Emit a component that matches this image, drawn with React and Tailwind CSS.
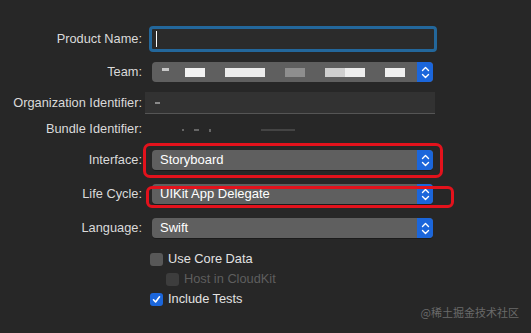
import React from 'react'

const Stepper = () => (
  <div className="w-[16px] h-full bg-[#1b66db] rounded-r-[4px] flex items-center justify-center">
    <svg width="9" height="13" viewBox="0 0 9 13" fill="none" stroke="white" strokeWidth="1.4" strokeLinecap="round" strokeLinejoin="round">
      <path d="M1.5 4.5 L4.5 1.5 L7.5 4.5" />
      <path d="M1.5 8.5 L4.5 11.5 L7.5 8.5" />
    </svg>
  </div>
)

function Popup({ value }) {
  return (
    <div className="ml-[2px] w-[281px] h-[20px] bg-[#5f5f5f] rounded-[4px] flex items-stretch shadow-[0_1px_0_rgba(0,0,0,0.3)]">
      <div className="flex-1 flex items-center pl-[8px] text-[13px] text-white overflow-hidden">
        {value}
      </div>
      <Stepper />
    </div>
  )
}

function Row({ label, className = '', children }) {
  return (
    <div className={`flex items-center ${className}`}>
      <div className="w-[143px] text-right pr-[1px] text-[12.8px] text-[#dadada] shrink-0">{label}</div>
      <div className="ml-[7px] flex items-center relative">{children}</div>
    </div>
  )
}

function Check({ checked, disabled, label, indent }) {
  return (
    <div className={`flex items-center h-[14px] ${indent ? 'ml-[166px]' : 'ml-[150px]'}`}>
      <div
        className={`w-[13px] h-[13px] rounded-[3px] flex items-center justify-center ${
          checked ? 'bg-[#1b66db]' : disabled ? 'bg-[#3d3d3d]' : 'bg-[#585858]'
        }`}
      >
        {checked && (
          <svg width="9" height="9" viewBox="0 0 9 9" fill="none" stroke="white" strokeWidth="1.6" strokeLinecap="round" strokeLinejoin="round">
            <path d="M1.5 4.8 L3.6 7 L7.5 1.8" />
          </svg>
        )}
      </div>
      <span className={`ml-[5px] text-[12.8px] ${disabled ? 'text-[#5e5e5e]' : 'text-[#e2e2e2]'}`}>{label}</span>
    </div>
  )
}

export default function App() {
  return (
    <div className="w-[531px] h-[333px] bg-[#272727] relative overflow-hidden pt-[26px]" style={{ fontFamily: '"Liberation Sans", Arial, sans-serif' }}>
      {/* Product Name */}
      <Row label="Product Name:" className="h-[26px]">
        <div className="-ml-[1px] w-[288px] h-[26px] rounded-[4px] border-[3px] border-[#23679b] bg-[#2b2b2b] flex items-center pl-[4px]">
          <div className="w-[1px] h-[16px] bg-white" />
        </div>
      </Row>

      {/* Team (blurred) */}
      <Row label="Team:" className="h-[20px] mt-[10px]">
        <div className="ml-[2px] w-[281px] h-[20px] bg-[#5f5f5f] rounded-[4px] flex items-stretch">
          <div className="flex-1 flex items-center pl-[10px] overflow-hidden">
            <div className="w-[7px] h-[3px] bg-[#c8c8c8] -mt-[5px]" />
            <div className="ml-[16px] w-[20px] h-[9px] bg-[#f2f2f2]" />
            <div className="ml-[20px] w-[40px] h-[9px] bg-[#ececec]" />
            <div className="ml-[20px] w-[20px] h-[9px] bg-[#8e8e8e]" />
            <div className="ml-[20px] w-[20px] h-[9px] bg-[#cfcfcf]" />
            <div className="w-[20px] h-[9px] bg-[#eeeeee]" />
            <div className="ml-[20px] w-[20px] h-[9px] bg-[#f0f0f0]" />
          </div>
          <Stepper />
        </div>
      </Row>

      {/* Organization Identifier */}
      <Row label="Organization Identifier:" className="h-[22px] mt-[10px]">
        <div className="-ml-[5px] w-[290px] h-[22px] bg-[#323232] border-b border-[#555555] flex items-center pl-[10px]">
          <div className="w-[5px] h-[2px] bg-[#8a8a8a]" />
        </div>
      </Row>

      {/* Bundle Identifier (blurred) */}
      <Row label="Bundle Identifier:" className="h-[18px] mt-[6px]">
        <div className="flex items-center gap-[10px] pl-[32px] pt-[2px]">
          <div className="w-[2px] h-[2px] bg-[#666]" />
          <div className="w-[5px] h-[2px] bg-[#666]" />
          <div className="w-[2px] h-[3px] bg-[#666]" />
          <div className="ml-[40px] w-[34px] h-[2px] bg-[#444]" />
        </div>
      </Row>

      {/* Interface */}
      <Row label="Interface:" className="h-[20px] mt-[12px]">
        <Popup value="Storyboard" />
        <div className="absolute -left-[7px] -top-[7px] w-[300px] h-[35px] border-[3px] border-[#e3121c] rounded-[7px] pointer-events-none" />
      </Row>

      {/* Life Cycle */}
      <Row label="Life Cycle:" className="h-[20px] mt-[14px]">
        <Popup value="UIKit App Delegate" />
        <div className="absolute -left-[4px] top-[2px] w-[308px] h-[22px] border-[3px] border-[#e3121c] rounded-[6px] pointer-events-none" />
      </Row>

      {/* Language */}
      <Row label="Language:" className="h-[20px] mt-[14px]">
        <Popup value="Swift" />
      </Row>

      <div className="mt-[14px] flex flex-col gap-[6px]">
        <Check label="Use Core Data" />
        <Check label="Host in CloudKit" disabled indent />
        <Check label="Include Tests" checked />
      </div>

      <div className="absolute right-[12px] bottom-[13px] text-[11px] text-[#6a6a6a]" style={{ fontFamily: '"Noto Sans CJK SC", sans-serif' }}>
        @稀土掘金技术社区
      </div>
    </div>
  )
}
